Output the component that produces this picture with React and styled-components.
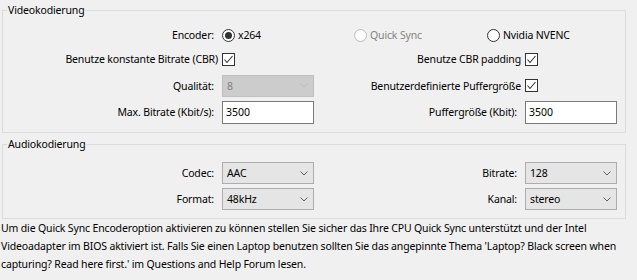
import React from "react";
import styled, { createGlobalStyle } from "styled-components";

const GlobalStyle = createGlobalStyle`
  html, body {
    margin: 0;
    background: #f0f0f0;
  }
  body {
    font-family: "Noto Sans", "Segoe UI", sans-serif;
    font-size: 10.5px;
    letter-spacing: -0.15px;
    color: #000;
  }
`;

const Chevron = ({ color }) => (
  <svg width="8" height="5" viewBox="0 0 8 5">
    <polyline points="0.5,0.5 4,4 7.5,0.5" fill="none" stroke={color} strokeWidth="1" />
  </svg>
);

const Tick = () => (
  <svg width="11" height="11" viewBox="0 0 11 11">
    <polyline points="1.5,5.5 4,8.5 9.5,2" fill="none" stroke="#333" strokeWidth="1.1" />
  </svg>
);

const RadioOption = ({ checked, disabled, children }) => (
  <Option $disabled={disabled}>
    <Circle $checked={checked} $disabled={disabled} />
    {children}
  </Option>
);

const Combo = ({ value, disabled }) => (
  <ComboBox $disabled={disabled}>
    <span>{value}</span>
    <Chevron color={disabled ? "#bcbcbc" : "#606060"} />
  </ComboBox>
);

class App extends React.Component {
  render() {
    return (
      <>
        <GlobalStyle />
        <Page>
          <Group>
            <Legend>Videokodierung</Legend>
            <FormGrid $rows="22px 26px 27px 26px" $top="6px">
              <Label>Encoder:</Label>
              <RadioRow>
                <RadioOption checked>x264</RadioOption>
                <RadioOption disabled>Quick Sync</RadioOption>
                <RadioOption>Nvidia NVENC</RadioOption>
              </RadioRow>

              <Label $tight>Benutze konstante Bitrate (CBR)</Label>
              <CheckBox><Tick /></CheckBox>
              <Label $tight>Benutze CBR padding</Label>
              <CheckBox><Tick /></CheckBox>

              <Label>Qualität:</Label>
              <Combo value="8" disabled />
              <Label $tight>Benutzerdefinierte Puffergröße</Label>
              <CheckBox><Tick /></CheckBox>

              <Label>Max. Bitrate (Kbit/s):</Label>
              <TextBox readOnly defaultValue="3500" />
              <Label>Puffergröße (Kbit):</Label>
              <TextBox readOnly defaultValue="3500" />
            </FormGrid>
          </Group>

          <Group $gap="3px">
            <Legend>Audiokodierung</Legend>
            <FormGrid $rows="24px 24px" $top="9px" $rowGap="2px">
              <Label>Codec:</Label>
              <Combo value="AAC" />
              <Label>Bitrate:</Label>
              <Combo value="128" />

              <Label>Format:</Label>
              <Combo value="48kHz" />
              <Label>Kanal:</Label>
              <Combo value="stereo" />
            </FormGrid>
          </Group>

          <Notice>
            Um die Quick Sync Encoderoption aktivieren zu können stellen Sie sicher das Ihre CPU Quick Sync unterstützt und der Intel
            <br />
            Videoadapter im BIOS aktiviert ist. Falls Sie einen Laptop benutzen sollten Sie das angepinnte Thema 'Laptop? Black screen when
            <br />
            capturing? Read here first.' im Questions and Help Forum lesen.
          </Notice>
        </Page>
      </>
    );
  }
}

export default App;

const Page = styled.div`
  width: 637px;
  height: 280px;
  padding-top: 2px;
  box-sizing: border-box;
  overflow: hidden;
`;

const Group = styled.fieldset`
  box-sizing: border-box;
  width: 624px;
  min-width: 0;
  margin: ${(p) => p.$gap || "0"} 0 0 2px;
  padding: 0 0 7px 0;
  border: 1px solid #dcdcdc;
`;

const Legend = styled.legend`
  margin-left: 4px;
  padding: 0 1px;
  line-height: 16px;
`;

const FormGrid = styled.div`
  display: grid;
  grid-template-columns: 211px 92px 195px 92px;
  grid-template-rows: ${(p) => p.$rows};
  column-gap: 8px;
  row-gap: ${(p) => p.$rowGap || "0"};
  padding-top: ${(p) => p.$top};
  align-items: center;
`;

const Label = styled.div`
  text-align: right;
  white-space: nowrap;
  margin-right: ${(p) => (p.$tight ? "-4px" : "0")};
`;

const RadioRow = styled.div`
  grid-column: 2 / 5;
  display: grid;
  grid-template-columns: 132px 133px auto;
  align-items: center;
`;

const Option = styled.div`
  display: flex;
  align-items: center;
  gap: 3px;
  white-space: nowrap;
  color: ${(p) => (p.$disabled ? "#838383" : "#000")};
`;

const Circle = styled.span`
  box-sizing: border-box;
  width: 13px;
  height: 13px;
  border-radius: 50%;
  border: 1px solid ${(p) => (p.$disabled ? "#bcbcbc" : "#333")};
  background: ${(p) => (p.$disabled ? "#fcfcfc" : "#fff")};
  display: flex;
  align-items: center;
  justify-content: center;

  &::after {
    content: "";
    display: ${(p) => (p.$checked ? "block" : "none")};
    width: 7px;
    height: 7px;
    border-radius: 50%;
    background: #333;
  }
`;

const CheckBox = styled.span`
  box-sizing: border-box;
  width: 13px;
  height: 13px;
  border: 1px solid #333;
  background: #fff;
  display: flex;
  align-items: center;
  justify-content: center;
`;

const ComboBox = styled.div`
  box-sizing: border-box;
  height: 22px;
  display: flex;
  align-items: center;
  justify-content: space-between;
  padding: 0 5px 0 4px;
  border: 1px solid ${(p) => (p.$disabled ? "#bfbfbf" : "#adadad")};
  background: ${(p) => (p.$disabled ? "#cccccc" : "#e5e5e5")};
  color: ${(p) => (p.$disabled ? "#838383" : "#000")};
`;

const TextBox = styled.input`
  box-sizing: border-box;
  width: 92px;
  height: 23px;
  margin: 0;
  padding: 0 0 0 3px;
  border: 1px solid #7a7a7a;
  background: #fff;
  font: inherit;
  color: #000;
  outline: none;
`;

const Notice = styled.p`
  margin: 0;
  padding-left: 1px;
  line-height: 18px;
  white-space: nowrap;
`;
